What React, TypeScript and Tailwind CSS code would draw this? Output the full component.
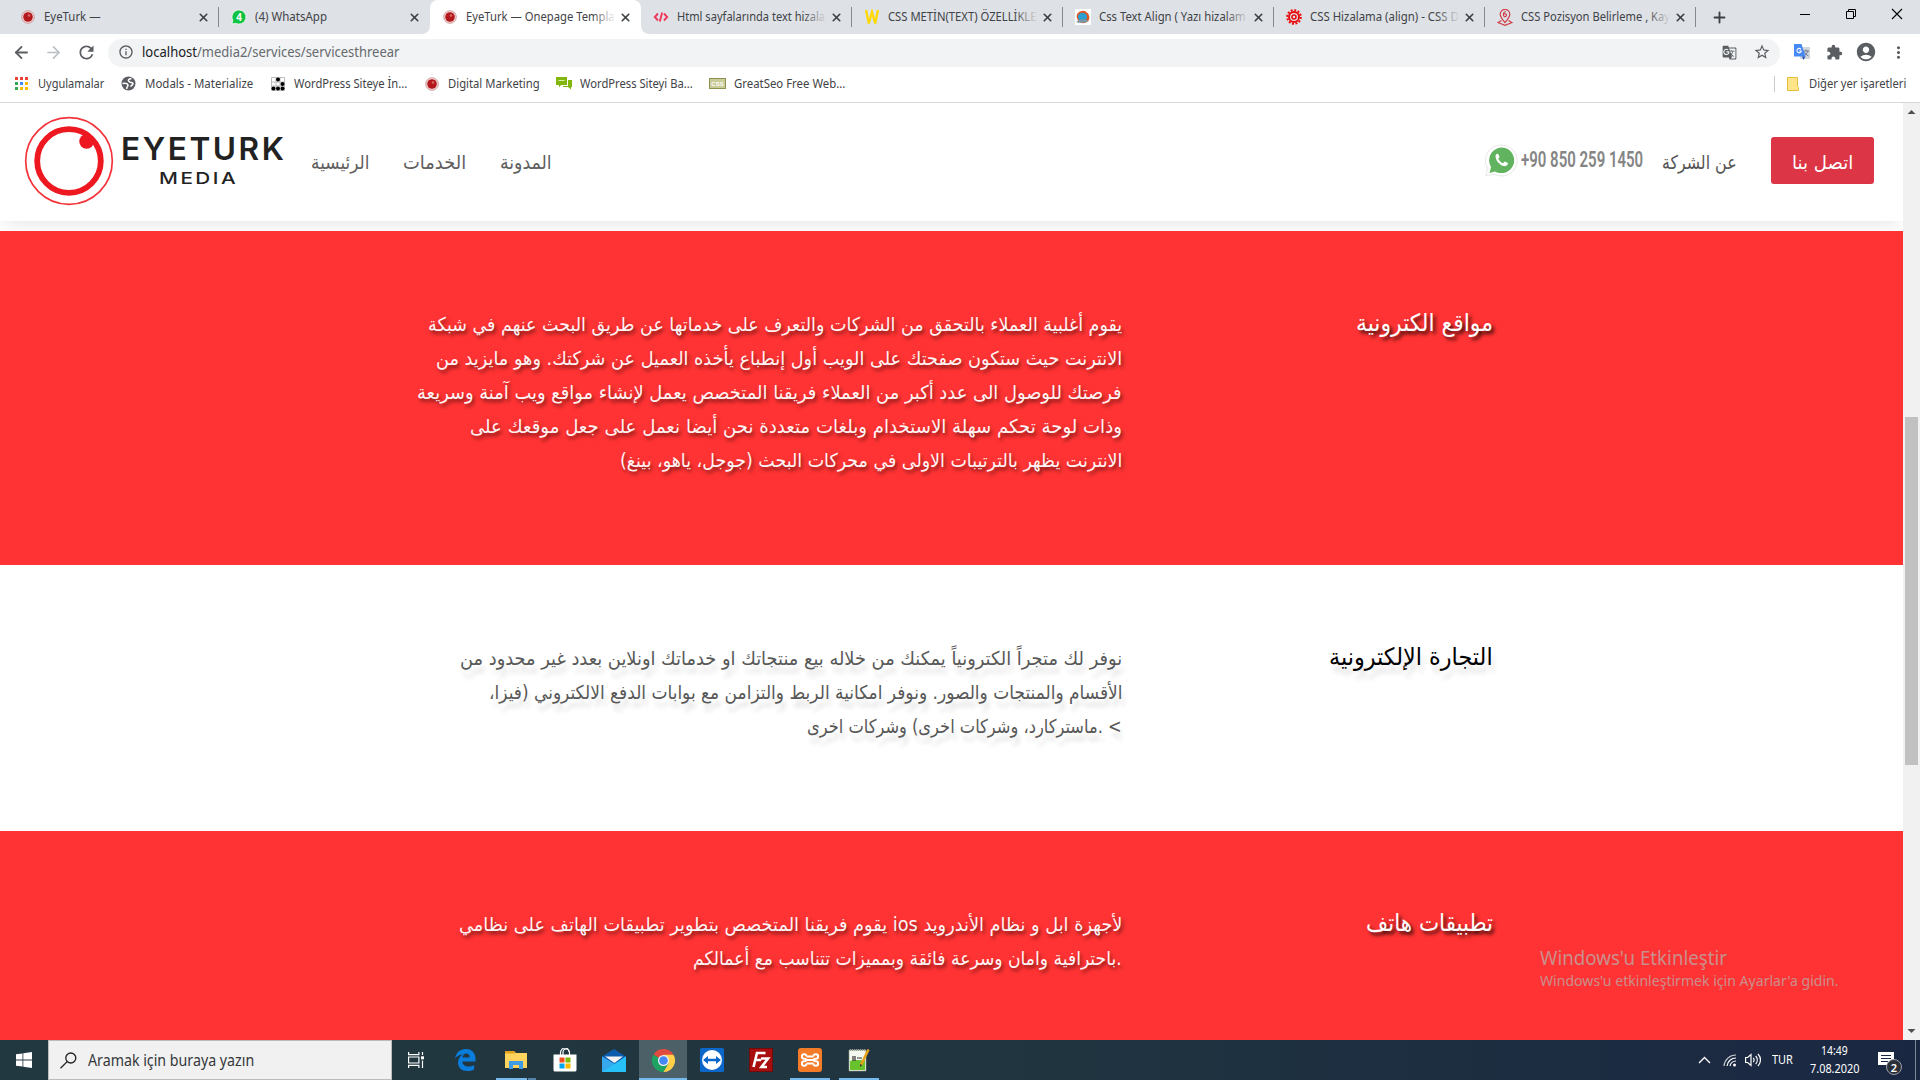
import { useLayoutEffect, useRef, useState, type ReactNode } from "react";
import { X, ArrowLeft, ArrowRight, Plus } from "lucide-react";
import { MdRefresh, MdInfoOutline, MdStarBorder, MdExtension, MdAccountCircle, MdMoreVert, MdGTranslate } from "react-icons/md";

/* One line of text, condensed or stretched to a given width. */
function Fit({ w, children, className = "", rtl = false }: { w: number; children: ReactNode; className?: string; rtl?: boolean }) {
  const ref = useRef<HTMLSpanElement>(null);
  const [k, setK] = useState(1);
  useLayoutEffect(() => {
    if (ref.current) setK(w / ref.current.offsetWidth);
  }, [w]);
  return (
    <span dir={rtl ? "rtl" : "ltr"} className={"flex shrink-0 justify-start whitespace-pre " + className} style={{ width: w }}>
      <span ref={ref} className={"block shrink-0 " + (rtl ? "origin-right" : "origin-left")} style={{ transform: `scaleX(${k})` }}>
        {children}
      </span>
    </span>
  );
}

const EyeIcon = () => (
  <svg width="14" height="14" viewBox="0 0 14 14">
    <circle cx="7" cy="7" r="6.3" fill="#f2d9d9" stroke="#c98a8a" strokeWidth="0.8" />
    <circle cx="7" cy="7" r="4.8" fill="#b3191c" />
    <circle cx="8" cy="5.5" r="1.3" fill="#d96a6a" />
  </svg>
);
const WaIcon = () => (
  <svg width="16" height="16" viewBox="0 0 16 16">
    <path d="M8 1a7 7 0 1 1-3.3 13.2L1 15l.9-3.6A7 7 0 0 1 8 1z" fill="#0dc143" stroke="#fff" strokeWidth="0.7" />
    <text x="8" y="11.5" fontSize="10" fontWeight="700" fill="#fff" textAnchor="middle" fontFamily="Open Sans, sans-serif">4</text>
  </svg>
);
const CodeIcon = () => (
  <svg width="16" height="16" viewBox="0 0 16 16" fill="none" stroke="#f0385c" strokeWidth="1.9">
    <path d="M5 4.5 1.8 8 5 11.5M11 4.5 14.2 8 11 11.5M9.2 3.5 6.8 12.5" />
  </svg>
);
const WIcon = () => (
  <svg width="16" height="17" viewBox="0 0 16 17" fill="none" stroke="#ffd800" strokeWidth="2.3">
    <path d="M2 1 4.8 14.5 8 3l3.2 11.5L14 1" />
  </svg>
);
const SwirlIcon = () => (
  <svg width="16" height="16" viewBox="0 0 16 16">
    <rect width="16" height="16" fill="#fff" />
    <ellipse cx="8" cy="8" rx="6.5" ry="6" fill="#e2561f" transform="rotate(35 8 8)" />
    <ellipse cx="7.500" cy="8" rx="4.600" ry="4.200" fill="#2a9fd0" />
    <path d="M1 13c3-3 8-4 13-1-4 2-9 2.500-13 1z" fill="#7c98a8" />
  </svg>
);
const GearIcon = () => (
  <svg width="16" height="16" viewBox="0 0 16 16" fill="none" stroke="#e80c0c">
    <circle cx="8" cy="8" r="6.800" strokeWidth="2" strokeDasharray="2 1.560" />
    <circle cx="8" cy="8" r="5" strokeWidth="2" />
    <circle cx="8" cy="8" r="2" strokeWidth="1.600" />
  </svg>
);
const PinIcon = () => (
  <svg width="16" height="17" viewBox="0 0 16 17" fill="none" stroke="#cf3d47" strokeWidth="1.200">
    <path d="M8 13.500C4 9 3.200 7.500 3.200 5.200a4.800 4.800 0 0 1 9.600 0C12.800 7.500 12 9 8 13.500z" />
    <path d="M8.800 2.500C6.500 3 6.300 5 6.500 6.500a1.500 1.500 0 1 0 .4-1.300M4.500 11.500 1 13.500l7 2.800 7-2.800-3.500-2" />
  </svg>
);

const tabs: { icon: ReactNode; text: string; w: number; active?: boolean; fade?: boolean }[] = [
  { icon: <EyeIcon />, text: "EyeTurk —", w: 57 },
  { icon: <WaIcon />, text: "(4) WhatsApp", w: 72 },
  { icon: <EyeIcon />, text: "EyeTurk — Onepage Templa", w: 149, active: true, fade: true },
  { icon: <CodeIcon />, text: "Html sayfalarında text hizala", w: 148, fade: true },
  { icon: <WIcon />, text: "CSS METİN(TEXT) ÖZELLİKLE", w: 149, fade: true },
  { icon: <SwirlIcon />, text: "Css Text Align ( Yazı hizalam", w: 147, fade: true },
  { icon: <GearIcon />, text: "CSS Hizalama (align) - CSS D", w: 149, fade: true },
  { icon: <PinIcon />, text: "CSS Pozisyon Belirleme , Kay", w: 149, fade: true },
];

function TabStrip() {
  return (
    <div className="flex h-[34px] bg-[#dee1e6] pl-[8px] text-[12px] leading-[16px] text-[#3f4347]">
      {tabs.map((t, i) => (
        <div
          key={i}
          className={
            "relative flex h-[34px] w-[211px] shrink-0 items-center pl-[12px] " +
            (t.active ? "rounded-t-[8px] bg-white" : "")
          }
        >
          {t.active && (
            <>
              <span className="absolute bottom-0 -left-[8px] size-[8px] bg-white" />
              <span className="absolute bottom-0 -left-[8px] size-[8px] rounded-br-[8px] bg-[#dee1e6]" />
              <span className="absolute -right-[8px] bottom-0 size-[8px] bg-white" />
              <span className="absolute -right-[8px] bottom-0 size-[8px] rounded-bl-[8px] bg-[#dee1e6]" />
            </>
          )}
          <span className="flex w-[16px] shrink-0 justify-center">{t.icon}</span>
          <span className="relative ml-[8px] w-[150px] overflow-hidden">
            <Fit w={t.w}>{t.text}</Fit>
            {t.fade && (
              <span className={"absolute inset-y-0 right-0 w-[24px] bg-linear-to-r from-transparent " + (t.active ? "to-white" : "to-[#dee1e6]")} />
            )}
          </span>
          <X size={13} strokeWidth={3} className="ml-[3px] shrink-0 text-[#3c4043]" />
          {i !== 1 && !t.active && <span className="ml-auto h-[20px] w-px bg-[#85898e]" />}
        </div>
      ))}
      <div className="flex w-[46px] items-center justify-center">
        <Plus size={17} strokeWidth={2.6} className="text-[#3c4043]" />
      </div>
      <div className="ml-auto flex h-[28px] w-[138px] items-center text-black">
        <svg className="w-[46px]" height="12" viewBox="0 0 46 12"><path d="M18 6.500h10" stroke="currentColor" /></svg>
        <svg className="w-[46px]" height="12" viewBox="0 0 46 12" fill="none" stroke="currentColor"><path d="M18.500 3.500h7v7h-7zM20.500 3.500v-2h7v7h-2" /></svg>
        <svg className="w-[46px]" height="12" viewBox="0 0 46 12" stroke="currentColor" strokeWidth="1.100"><path d="m18 1 10 10M28 1 18 11" /></svg>
      </div>
    </div>
  );
}

const TranslateBlue = () => (
  <svg width="16" height="16" viewBox="0 0 16 16">
    <rect x="6" y="3" width="10" height="12" fill="#d4d7dc" />
    <path d="M9 7h6M12 5.500V7m2 0c-.5 2-2.500 4-4 5m.5-4c1 2 2 3 4 4" stroke="#68788f" fill="none" />
    <path d="M0 0h7.500L11.500 12.500H0z" fill="#4688f4" />
    <path d="m8 12.500 1.500 3.500 2-3.500z" fill="#2850b8" />
    <path d="M6.900 5.300A2.200 2.200 0 1 0 7.300 7H5.200" stroke="#fff" strokeWidth="1.100" fill="none" />
  </svg>
);

function Toolbar() {
  return (
    <div className="flex h-[36px] items-center pt-[2px] text-[#5a5e63]">
      <div className="flex w-[108px] items-center pb-[2px] pl-[12px]">
        <ArrowLeft size={19} strokeWidth={2.3} />
        <ArrowRight size={19} strokeWidth={2.1} className="ml-[13px] text-[#bcbfc3]" />
        <MdRefresh size={21} className="ml-[13px]" />
      </div>
      <div className="flex h-[28px] w-[1672px] items-center rounded-full bg-[#f1f3f4] pb-[2px] pl-[10px] text-[13.500px] leading-[18px]">
        <MdInfoOutline size={16} />
        <Fit w={55} className="ml-[8px] text-[#202124]">localhost</Fit>
        <Fit w={202} className="text-[#66696e]">/media2/services/servicesthreear</Fit>
        <MdGTranslate size={15} className="ml-auto" />
        <MdStarBorder size={18} className="mr-[9px] ml-[16px]" />
      </div>
      <div className="flex items-center pb-[2px] pl-[14px]">
        <TranslateBlue />
        <MdExtension size={17} className="ml-[16px]" />
        <MdAccountCircle size={22} className="ml-[12px]" />
        <MdMoreVert size={19} className="ml-[12px]" />
      </div>
    </div>
  );
}

const appColors = [
  "bg-[#ea4335]", "bg-[#ea4335]", "bg-[#ea4335]",
  "bg-[#34a853]", "bg-[#4285f4]", "bg-[#fbbc05]",
  "bg-[#34a853]", "bg-[#fbbc05]", "bg-[#fbbc05]",
];

const bookmarks: { icon: ReactNode; text: string; w: number; adv: string }[] = [
  {
    icon: <div className="grid grid-cols-3 gap-[2px]">{appColors.map((c, i) => <span key={i} className={"size-[3px] " + c} />)}</div>,
    text: "Uygulamalar", w: 66, adv: "w-[107px]",
  },
  {
    icon: (
      <svg width="15" height="15" viewBox="0 0 15 15"><circle cx="7.500" cy="7.500" r="7" fill="#5a5e63" /><path d="M1.500 7.500c3-.5 5 0 5.500 1.500s-2 1.500-1 4M10.500 2.500C7.500 3 6.500 4 8 5.500s3.500.5 4 2c0 1.500-1.500 2-2.500 3" stroke="#fff" strokeWidth="1.500" fill="none" /></svg>
    ),
    text: "Modals - Materialize", w: 108, adv: "w-[149px]",
  },
  {
    icon: (
      <svg width="14" height="14" viewBox="0 0 14 14"><path d="M.5.500h13v13H.5zM5 0v14M9 0v14M0 5h14M0 9h14" stroke="#bbb" fill="#fff" /><circle cx="7" cy="2.500" r="2" /><circle cx="11.500" cy="7" r="2" /><circle cx="2.500" cy="11.500" r="2" /><circle cx="7" cy="11.500" r="2" /><circle cx="11.500" cy="11.500" r="2" /></svg>
    ),
    text: "WordPress Siteye İn...", w: 113, adv: "w-[154px]",
  },
  { icon: <EyeIcon />, text: "Digital Marketing", w: 92, adv: "w-[132px]" },
  {
    icon: (
      <svg width="16" height="13" viewBox="0 0 16 13" fill="#82b60a"><path d="M0 0h11v8H5l-2 2.500V8H0z" /><path d="M12 3h4v7h-1v2.500L12 10H7V9h5z" /><path d="M2.500 3.500h6" stroke="#d9edae" /></svg>
    ),
    text: "WordPress Siteyi Ba...", w: 113, adv: "w-[154px]",
  },
  {
    icon: (
      <svg width="17" height="11" viewBox="0 0 17 11"><rect x=".5" y=".5" width="16" height="10" fill="#c9cb98" stroke="#8e9150" /><text x="8.500" y="8" fontSize="6" fontWeight="700" fill="#fff" textAnchor="middle" fontFamily="Liberation Sans, sans-serif">CSS</text></svg>
    ),
    text: "GreatSeo Free Web...", w: 111, adv: "w-[160px]",
  },
];

function Bookmarks() {
  return (
    <div className="flex h-[33px] items-center border-b border-[#d6d8da] pb-[5px] pl-[13px] text-[12px] leading-[16px] text-[#3f4347]">
      {bookmarks.map((b) => (
        <div key={b.text} className={"flex shrink-0 items-center " + b.adv}>
          <span className="flex w-[17px] shrink-0 justify-center">{b.icon}</span>
          <Fit w={b.w} className="ml-[8px]">{b.text}</Fit>
        </div>
      ))}
      <div className="ml-auto flex items-center pr-[14px]">
        <span className="h-[16px] w-px bg-[#c8cacd]" />
        <svg width="12" height="14" viewBox="0 0 12 14" className="ml-[12px]"><path d="M.5.500h10v9l1 1v3H.5z" fill="#ffe48a" stroke="#e6be3e" /></svg>
        <Fit w={97} className="ml-[10px]">Diğer yer işaretleri</Fit>
      </div>
    </div>
  );
}

const ARABIC = "font-['DejaVu_Sans',sans-serif]";

function SiteHeader() {
  return (
    <header className="relative z-10 flex h-[118px] shrink-0 bg-white shadow-[0_8px_16px_-4px_rgba(0,0,0,0.09)]">
      <svg width="90" height="90" viewBox="0 0 90 90" className="mt-[13px] ml-[24px] shrink-0" fill="none">
        <circle cx="45" cy="45" r="43.300" stroke="#f5333a" strokeWidth="1.700" />
        <circle cx="45" cy="45" r="31.800" stroke="#ee1820" strokeWidth="5.800" />
        <circle cx="62.600" cy="25.500" r="7.300" fill="#ee1820" />
      </svg>
      <div className="mt-[27px] ml-[6px] flex w-[166px] flex-col items-center font-['Inter',sans-serif] text-[#222]">
        <Fit w={165} className="text-[31px] leading-[37px] font-semibold tracking-[2.500px]">EYETURK</Fit>
        <Fit w={79} className="mt-[1px] -ml-[9px] text-[16.500px] leading-[21px] font-medium tracking-[2px]">MEDIA</Fit>
      </div>
      <nav className={"mt-[44px] ml-[25px] flex text-[19px] leading-[30px] text-[#606060] " + ARABIC}>
        <Fit rtl w={58}>الرئيسية</Fit>
        <Fit rtl w={63} className="ml-[34px]">الخدمات</Fit>
        <Fit rtl w={52} className="ml-[34px]">المدونة</Fit>
      </nav>
      <div className="mr-[29px] ml-auto flex h-[115px] items-center">
        <svg width="33" height="33" viewBox="0 0 33 33">
          <path d="M16.500 1A15.500 15.500 0 1 1 9 30L1 32l1.500-8A15.500 15.500 0 0 1 16.500 1z" fill="#fff" stroke="#e8e8e8" />
          <path d="M16.500 3.500A12.800 12.800 0 1 1 10 27.400L4.500 29 6 23A12.800 12.800 0 0 1 16.500 3.500z" fill="#62b35f" />
          <path d="M10.500 12c.3-2 1.500-2.600 2.600-2.300l1.500 3.300-1.300 1.800c1 2.400 2.600 3.700 4.700 4.500l1.700-1.900 3.300 1.700c-.1 2.500-2.300 3.300-4 3-4-.8-8.400-5.100-8.500-10.100z" fill="#fff" />
        </svg>
        <Fit w={122} className="-mt-[2px] ml-[3px] font-['Roboto',sans-serif] text-[21.500px] leading-[28px] font-semibold text-[#858585]">+90 850 259 1450</Fit>
        <Fit rtl w={75} className={"mt-[2px] ml-[19px] text-[19px] leading-[30px] text-[#555] " + ARABIC}>عن الشركة</Fit>
        <button className={"ml-[34px] flex h-[47px] w-[103px] items-center justify-center rounded-[3px] bg-[#dc3545] pt-[2px] text-[19px] leading-[30px] text-white " + ARABIC}>
          <Fit rtl w={61}>اتصل بنا</Fit>
        </button>
      </div>
    </header>
  );
}

type Line = { text: string; w: number };

function Service({ title, titleW, lines, red, className }: { title: string; titleW: number; lines: Line[]; red?: boolean; className: string }) {
  return (
    <section
      dir="rtl"
      className={
        "flex shrink-0 items-start pt-[76px] pr-[410px] " + ARABIC + " " +
        (red ? "bg-[#ff3333] text-white " : "bg-white [text-shadow:3px_8px_5px_rgba(0,0,0,0.12)] ") + className
      }
    >
      <div className="w-[371px] shrink-0">
        <h2 className={"text-[24px] leading-[33px] " + (red ? "[text-shadow:3px_3px_4px_rgba(0,0,0,0.8)] text-white" : "text-black")}>
          <Fit rtl w={titleW}>{title}</Fit>
        </h2>
      </div>
      <div className={"text-[19px] leading-[34px] " + (red ? "[text-shadow:2px_3px_4px_rgba(0,0,0,0.5)] text-[#fff4f4]" : "text-[#585858]")}>
        {lines.map((l) => <Fit rtl key={l.text} w={l.w}>{l.text}</Fit>)}
      </div>
    </section>
  );
}

function Scrollbar() {
  return (
    <div className="flex w-[17px] shrink-0 flex-col items-center bg-[#f1f1f1]">
      <svg width="17" height="17" viewBox="0 0 17 17"><path d="M4.500 11h8l-4-4z" fill="#505050" /></svg>
      <div className="mt-[297px] h-[348px] w-[13px] bg-[#c1c1c1]" />
      <svg width="17" height="17" viewBox="0 0 17 17" className="mt-auto"><path d="M4.500 6h8l-4 4z" fill="#505050" /></svg>
    </div>
  );
}

const apps: { icon: ReactNode; bar?: ReactNode; active?: boolean }[] = [
  {
    icon: (
      <svg width="22" height="22" viewBox="0 0 22 22"><path d="M0 2h9l2 2h11v15H0z" fill="#ffd45e" /><path d="M0 2h9l1.500 2.500H0z" fill="#e0a21b" /><path d="M4 20v-8h14v8h-4v-4H8v4z" fill="#3f9be3" /></svg>
    ),
    bar: <><span className="ml-[4px] h-[2px] w-[31px] bg-[#76b9ed]" /><span className="ml-px h-[2px] w-[8px] bg-[#5584a8]" /></>,
  },
  {
    icon: (
      <svg width="24" height="24" viewBox="0 0 24 24"><path d="M7.500 7V4.500a4.500 4.500 0 0 1 9 0V7M10 7V4a3 3 0 0 1 6 0" stroke="#fff" fill="none" strokeWidth="1.200" /><path d="M.5 6.500h23V22a1.500 1.500 0 0 1-1.500 1.500H2A1.500 1.500 0 0 1 .5 22z" fill="#fff" /><path d="M6.500 9.500h5v5h-5z" fill="#f25022" /><path d="M12.500 9.500h5v5h-5z" fill="#7fba00" /><path d="M6.500 15.500h5v5h-5z" fill="#00a4ef" /><path d="M12.500 15.500h5v5h-5z" fill="#ffb900" /></svg>
    ),
  },
  {
    icon: (
      <svg width="24" height="23" viewBox="0 0 24 23"><path d="M0 7.500 12 0l12 7.500V15H0z" fill="#0b5cad" /><path d="M0 7.500 13 15l11-7.500V23H0z" fill="#36a8ee" /><path d="M24 7.500 0 23h24z" fill="#27c1f7" /><path d="M3 7.500h18L12.500 14z" fill="#f3f3f3" /></svg>
    ),
  },
  {
    active: true,
    icon: (
      <svg width="23" height="23" viewBox="0 0 24 24"><path d="M12 12 1.600 6A12 12 0 0 1 22.400 6z" fill="#e04a3f" /><path d="M12 12 1.600 6A12 12 0 0 0 12 24l5.200-9z" fill="#1ea362" /><path d="M12 12l5.200 3L12 24A12 12 0 0 0 22.400 6H12z" fill="#ffd048" /><circle cx="12" cy="12" r="5.800" fill="#f1f1f1" /><circle cx="12" cy="12" r="4.500" fill="#4587f3" /></svg>
    ),
    bar: <span className="h-[2px] w-[48px] bg-[#76b9ed]" />,
  },
  {
    icon: (
      <svg width="24" height="24" viewBox="0 0 24 24"><rect width="24" height="24" rx="1.500" fill="#0b67c9" /><circle cx="12" cy="12" r="10" fill="#fff" /><path d="m3 12 5-4v2.800h8V8l5 4-5 4v-2.800H8V16z" fill="#0b67c9" /></svg>
    ),
  },
  {
    icon: (
      <svg width="24" height="24" viewBox="0 0 24 24"><rect x=".5" y=".5" width="23" height="23" fill="#a90e0e" stroke="#700" strokeDasharray="2 1" /><path d="M4.500 19 8 5h8.500M6.200 12h6M12 10.500h7L12.500 19H18" stroke="#fff" strokeWidth="2.600" fill="none" /></svg>
    ),
  },
  {
    icon: (
      <svg width="24" height="24" viewBox="0 0 24 24"><rect width="24" height="24" rx="3" fill="#f47c28" /><path d="M8.500 8.500h7M8.500 15.500h7M9 12h6M8.500 8.500a2.300 2.300 0 1 0-2.300 2.300c1 0 2 .2 2 1.200s-1 1.200-2 1.200a2.300 2.300 0 1 0 2.300 2.300M15.500 8.500a2.300 2.300 0 1 1 2.300 2.300c-1 0-2 .2-2 1.200s1 1.200 2 1.200a2.300 2.300 0 1 1-2.300 2.300" stroke="#fff" strokeWidth="1.900" fill="none" /></svg>
    ),
    bar: <span className="ml-[4px] h-[2px] w-[40px] bg-[#76b9ed]" />,
  },
  {
    icon: (
      <svg width="22" height="24" viewBox="0 0 22 24"><path d="M1 2h17v21H1z" fill="#f5f8ee" stroke="#8b9a85" strokeWidth=".6" /><path d="M2 13c6-2 10 0 15-1v10H2z" fill="#68c22c" /><path d="M2 2h15" stroke="#999" strokeWidth="2" strokeDasharray="1 1" /><path d="M5 8v5M7 8v5M9 10h5" stroke="#333" strokeWidth="1.200" /><path d="M20.500 1.500 13 17" stroke="#e9a21c" strokeWidth="2.600" /><path d="m12 19 .2-3 2 1z" fill="#333" /></svg>
    ),
    bar: <span className="ml-[4px] h-[2px] w-[40px] bg-[#76b9ed]" />,
  },
];

function Taskbar() {
  return (
    <div className="flex h-[40px] shrink-0 bg-linear-to-r from-[#223840] via-[#20353f] to-[#1a2742] text-white">
      <div className="flex w-[48px] items-center justify-center">
        <svg width="16" height="16" viewBox="0 0 16 16" fill="#fff"><path d="M0 2.300 6.500 1.400v6.200H0zM7.300 1.300 16 0v7.600H7.300zM0 8.400h6.500v6.200L0 13.700zM7.300 8.400H16V16l-8.700-1.200z" /></svg>
      </div>
      <div className="flex w-[344px] items-center border border-[#b9bcbd] bg-[#f1f1f1] pl-[11px] text-[#35383b]">
        <svg width="17" height="17" viewBox="0 0 17 17" fill="none" stroke="#222" strokeWidth="1.300"><circle cx="10.800" cy="6" r="5" /><path d="m7.200 9.600-6.700 6.700" /></svg>
        <Fit w={166} className="ml-[11px] text-[15.500px] leading-[22px]">Aramak için buraya yazın</Fit>
      </div>
      <div className="flex w-[48px] items-center justify-center">
        <svg width="16" height="16" viewBox="0 0 16 16" fill="none" stroke="#fff" strokeWidth="1.200"><path d="M.6 0v2.600h10.300V0M.6 16v-2.600h10.300V16M.6 5h10.300v6H.6zM14.500 0v3M14.500 8.500V16" /><path d="M13 4.300h3v3h-3z" fill="#fff" stroke="none" /></svg>
      </div>
      <div className="mr-px flex w-[51px] items-center justify-center">
        <svg width="21" height="22" viewBox="0 0 21 22" fill="#0a7cdb"><path d="M0 10C1 3.500 5 0 10.800 0 17.500 0 20.500 4.500 20.500 9.500v3H7.300c.2 3.500 3 5 6 5 2.200 0 4.200-.6 5.800-1.600v4.500C17 21.500 14.800 22 12.300 22 6.500 22 3 18.500 3 13.500c0-3.500 2-6.600 5-8C4.500 5.500 1.500 7 0 10zm7.500-1.500h7.200c0-2.500-1.200-4-3.400-4s-3.500 1.700-3.800 4z" /></svg>
      </div>
      {apps.map((a, i) => (
        <div key={i} className={"mr-px flex w-[48px] flex-col " + (a.active ? "bg-[#4c6067]" : "")}>
          <div className="flex h-[38px] items-center justify-center pt-[2px]">{a.icon}</div>
          <div className="flex">{a.bar}</div>
        </div>
      ))}
      <div className="ml-auto flex items-center">
        <svg width="13" height="8" viewBox="0 0 13 8" fill="none" stroke="#fff" strokeWidth="1.400"><path d="M1 7l5.500-5.500L12 7" /></svg>
        <svg width="14" height="14" viewBox="0 0 14 14" fill="none" stroke="#fff" strokeWidth="1.200" className="ml-[12px]"><path d="M1 13A12 12 0 0 1 13 2" opacity=".75" /><path d="M4 13A9 9 0 0 1 13 5M7 13a6 6 0 0 1 6-5" /><circle cx="11.500" cy="12" r="1.500" fill="#fff" stroke="none" /></svg>
        <svg width="17" height="14" viewBox="0 0 17 14" fill="none" stroke="#fff" strokeWidth="1.200" className="ml-[8px]"><path d="M.6 4.500h2L6 1.500v11l-3.400-3h-2zM8.300 5c1 1 1 3 0 4M10.700 3c2 2.300 2 5.700 0 8M13 1c3.300 3.500 3.300 8.500 0 12" /></svg>
        <Fit w={21} className="ml-[10px] text-[12px] leading-[16px]">TUR</Fit>
        <div className="ml-[16px] flex w-[50px] flex-col items-center gap-[2px] text-[12px] leading-[16px]">
          <Fit w={27}>14:49</Fit>
          <Fit w={49}>7.08.2020</Fit>
        </div>
        <div className="relative ml-[19px] size-[24px]">
          <svg width="17" height="17" viewBox="0 0 17 17" className="mt-[4px]"><path d="M0 0h16v13h-4v4l-4-4H0z" fill="#fff" /><path d="M3 3.500h10M3 6.500h10M3 9.500h7" stroke="#1a2742" /></svg>
          <span className="absolute top-[11px] left-[8px] flex size-[16px] items-center justify-center rounded-full border border-[#9aa0a8] bg-[#2a2f38] text-[11px] leading-none font-semibold">2</span>
        </div>
        <span className="ml-[13px] h-[40px] w-px bg-[#7f8794]" />
        <span className="w-[4px]" />
      </div>
    </div>
  );
}

export default function App() {
  return (
    <div className="relative flex h-[1080px] w-[1920px] flex-col overflow-hidden bg-white font-['Noto_Sans','Open_Sans',sans-serif]">
      <TabStrip />
      <Toolbar />
      <Bookmarks />
      <div className="flex h-[937px] shrink-0">
        <main className="flex w-[1903px] shrink-0 flex-col overflow-hidden">
          <SiteHeader />
          <div className="h-[10px] shrink-0 bg-white" />
          <div className="relative z-20 flex flex-col">
            <Service
              red
              className="h-[334px]"
              title="مواقع الكترونية"
              titleW={137}
              lines={[
                { text: "يقوم أغلبية العملاء بالتحقق من الشركات والتعرف على خدماتها عن طريق البحث عنهم في شبكة", w: 694 },
                { text: "الانترنت حيث ستكون صفحتك على الويب أول إنطباع يأخذه العميل عن شركتك. وهو مايزيد من", w: 686 },
                { text: "فرصتك للوصول الى عدد أكبر من العملاء فريقنا المتخصص يعمل لإنشاء مواقع ويب آمنة وسريعة", w: 705 },
                { text: "وذات لوحة تحكم سهلة الاستخدام وبلغات متعددة نحن أيضا نعمل على جعل موقعك على", w: 652 },
                { text: "الانترنت يظهر بالترتيبات الاولى في محركات البحث (جوجل، ياهو، بينغ)", w: 502 },
              ]}
            />
            <Service
              className="h-[266px]"
              title="التجارة الإلكترونية"
              titleW={164}
              lines={[
                { text: "نوفر لك متجراً الكترونياً يمكنك من خلاله بيع منتجاتك او خدماتك اونلاين بعدد غير محدود من", w: 662 },
                { text: "الأقسام والمنتجات والصور. ونوفر امكانية الربط والتزامن مع بوابات الدفع الالكتروني (فيزا،", w: 633 },
                { text: "> .ماستركارد، وشركات اخرى) وشركات اخرى", w: 315 },
              ]}
            />
            <Service
              red
              className="h-[209px]"
              title="تطبيقات هاتف"
              titleW={127}
              lines={[
                { text: "لأجهزة ابل و نظام الأندرويد ios يقوم فريقنا المتخصص بتطوير تطبيقات الهاتف على نظامي", w: 663 },
                { text: ".باحترافية وامان وسرعة فائقة وبمميزات تتناسب مع أعمالكم", w: 429 },
              ]}
            />
          </div>
        </main>
        <Scrollbar />
      </div>
      <Taskbar />
      <div className="absolute top-[944px] left-[1540px] z-30 text-[#c98f8d]">
        <Fit w={187} className="text-[19.500px] leading-[28px]">Windows'u Etkinleştir</Fit>
        <Fit w={299} className="-mt-px text-[14.500px] leading-[18px]">Windows'u etkinleştirmek için Ayarlar'a gidin.</Fit>
      </div>
    </div>
  );
}
